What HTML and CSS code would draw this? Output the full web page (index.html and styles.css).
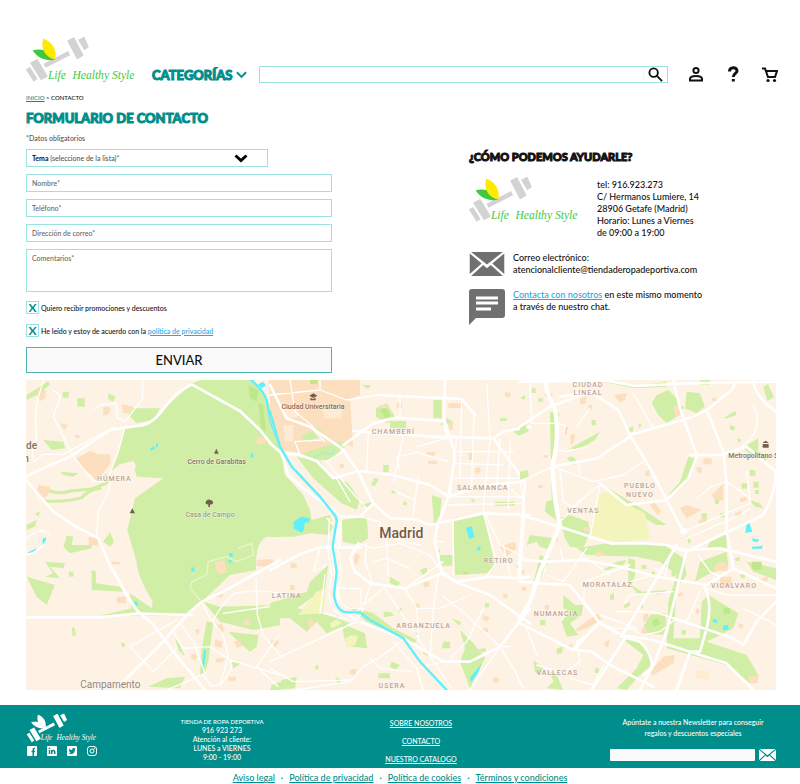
FILE: index.html
```
<!DOCTYPE html>
<html lang="es">
<head>
<meta charset="utf-8">
<meta name="viewport" content="width=device-width, initial-scale=1">
<title>Formulario de contacto - Life Healthy Style</title>
<link rel="stylesheet" href="styles.css">
</head>
<body>
<svg class="defs" aria-hidden="true">
  <symbol id="logo" viewBox="78 20 332 142">
    <g class="weights">
      <path d="M202 34l21-11 29 56-20 12zM235 31l19-9 14 31-14 10zM90 101l22-12 32 53-21 12zM77 121l13-7 23 36-12 8zM131 104l74-39 6 13-74 38z"/>
    </g>
    <path class="leaf-green" d="M166 91C145 98 111 88 98 63C128 57 154 65 166 91Z"/>
    <path class="leaf-yellow" d="M166 91C135 84 121 58 130 28C158 37 172 62 166 91Z"/>
    <text x="144" y="149" class="logo-text">Life</text>
    <text x="218" y="149" class="logo-text">Healthy Style</text>
  </symbol>
  <symbol id="envelope" viewBox="0 0 36 25">
    <path d="M1.500 0h33L18 13zM0 1.500L12.500 12 0 23zM36 1.500V23L23.500 12zM1.500 25L14 13.500l4 3.500 4-3.500L34.500 25z"/>
  </symbol>
</svg>

<header class="top">
  <a class="brand" href="#" aria-label="Life Healthy Style"><svg class="logo"><use href="#logo"/></svg></a>
  <button class="categories" type="button">CATEGORÍAS
    <svg class="chevron" viewBox="0 0 12 8"><path d="M1 1l5 5 5-5"/></svg>
  </button>
  <form class="search" role="search">
    <input type="search" aria-label="Buscar">
    <button type="submit" aria-label="Buscar">
      <svg viewBox="0 0 16 16"><circle cx="6" cy="6" r="4.500"/><path d="M9 9l6 6"/></svg>
    </button>
  </form>
  <nav class="tools" aria-label="Cuenta">
    <a href="#" aria-label="Mi cuenta"><svg viewBox="0 0 16 16"><circle cx="8" cy="4" r="2.600"/><path d="M2 14v-1.500c0-4 12-4 12 0V14z"/></svg></a>
    <a href="#" aria-label="Ayuda"><svg viewBox="0 0 16 16"><path class="thick" d="M4.500 5c0-5 7.500-5 7.500-.5C12 7 8.300 7 8.300 10.500M8.300 12.500v2.500"/></svg></a>
    <a href="#" aria-label="Carrito"><svg viewBox="0 0 16 16"><path d="M0 2h3l3 8.500h7L15 4.500H4.500"/><circle class="dot" cx="6" cy="14" r="1.600"/><circle class="dot" cx="12.500" cy="14" r="1.600"/></svg></a>
  </nav>
</header>

<main>
  <nav class="crumbs" aria-label="Ruta"><a href="#">INICIO</a> &gt; CONTACTO</nav>
  <h1>FORMULARIO DE CONTACTO</h1>

  <div class="columns">
    <form class="contact">
      <p class="note">*Datos obligatorios</p>
      <div class="picker">
        <label for="tema"><b>Tema</b> (seleccione de la lista)*</label>
        <select id="tema"><option value=""></option></select>
        <svg viewBox="0 0 14 9"><path d="M1.500 1.500L7 6.500l5.500-5"/></svg>
      </div>
      <input class="field" type="text" placeholder="Nombre*" aria-label="Nombre">
      <input class="field" type="tel" placeholder="Teléfono*" aria-label="Teléfono">
      <input class="field" type="email" placeholder="Dirección de correo*" aria-label="Dirección de correo">
      <textarea class="field area" placeholder="Comentarios*" aria-label="Comentarios"></textarea>
      <div class="check"><input id="promo" type="checkbox" checked><label for="promo">Quiero recibir promociones y descuentos</label></div>
      <div class="check"><input id="priv" type="checkbox" checked><label for="priv">He leído y estoy de acuerdo con la <a href="#">política de privacidad</a></label></div>
      <button class="send" type="submit">ENVIAR</button>
    </form>

    <section class="help">
      <h2>¿CÓMO PODEMOS AYUDARLE?</h2>
      <div class="shop">
        <svg class="logo"><use href="#logo"/></svg>
        <address>tel: 916.923.273<br>C/ Hermanos Lumiere, 14<br>28906 Getafe (Madrid)<br>Horario: Lunes a Viernes<br>de 09:00 a 19:00</address>
      </div>
      <div class="way">
        <svg class="mail"><use href="#envelope"/></svg>
        <p>Correo electrónico:<br>atencionalcliente@tiendaderopadeportiva.com</p>
      </div>
      <div class="way">
        <svg class="chat" viewBox="0 0 36 36"><path d="M3 0h30q3 0 3 3v23q0 3-3 3H7l-7 7V3q0-3 3-3z"/><path class="lines" d="M7 9h22M7 14h22M7 20h15"/></svg>
        <p><a href="#">Contacta con nosotros</a> en este mismo momento<br>a través de nuestro chat.</p>
      </div>
    </section>
  </div>

  <svg class="map" viewBox="18 15 2250 930" role="img" aria-label="Mapa de Madrid">
    <rect class="land" x="18" y="15" width="2250" height="930"/>

    <!-- West: Casa de Campo -->
    <g>
      <path class="park" d="M515 25L545 15H700L745 80L790 230V485H740Q705 500 708 585L630 600L545 680L500 722H400L240 722L335 700L330 655L395 700L398 680Q350 600 350 560L322 465L345 370L430 310L350 305L340 270L270 290L300 215L315 155H370Q410 140 440 95Z"/>
      <path class="land" d="M272 290L300 268L340 258L348 272L340 300L350 306L300 330L262 340Z"/>
      <path class="park" d="M330 100H420L400 135L350 145L325 120zM20 605L105 630L80 690L50 665zM70 195L130 200L135 220L95 225zM120 290L175 295L160 305L130 300zM140 482L160 485L155 510H215V520L150 535L130 515zM270 472L282 500L270 515L250 500zM215 585L228 590V625L300 635L310 650L215 645zM75 560L135 565L130 580L90 575L120 610L75 605L100 595zM145 590h15v15h-12zM172 70h22v25h-22zM128 50h18v18h-18zM265 55l22 10-8 15-15-8zM20 60L60 35L85 18L90 30L50 60L20 75zM155 758l8-2 5 25-10 2zM305 802l12 4-6 12-8-8zM20 450l30-15-5 20-25 10zM45 415l15-5-5 15zM385 935L440 910L495 905L480 940zM560 740L580 740L565 860L555 895L540 900L545 820zM550 680L600 695L780 690V750L700 765L600 740zM625 770L715 780L710 815L690 830L655 800zM465 790l15 20 15 35-20-20zM635 860l30 5-25 15zM755 930l25-10v25h-30z"/>
      <path class="hedge" d="M80 345Q120 360 150 348L215 342L265 322M78 378Q140 382 185 368Q205 345 240 340"/>
      <path class="park-deep" d="M685 30l30 15-5 35-20-10zM715 85l15 5 8 80-15-10z"/>
      <path class="built" d="M168 250L210 228L235 238L270 238L272 265L230 320L215 300L190 285zM55 330L90 335L85 360L70 372L50 355zM305 88L340 95L330 115L310 115zM250 95l22 2-5 20-18 5zM55 45h22v25l-15 8-10-15zM205 487h30v25l-28-2zM585 560L612 555L622 590L600 598L588 585zM710 185L740 190L735 205L710 210zM710 555L750 552L765 560L740 575L710 573zM275 560h26v8h-26zM590 655h18v12h-18zM290 665h28v20h-28zM525 765l16-4-8 22zM585 750l20-4 10 20-14 10zM585 792l22 8-2 20-20-6zM585 850h30l-8 12h-18zM515 835l18 8-8 14-14-8zM670 735l18-4v20h-16zM640 800l16-4 14 15-18 8zM750 800l18-8 10 12-14 14zM120 145l25 5-12 15zM165 180h14v10h-14zM625 905h22v12h-22z"/>
      <path class="built" d="M745 18h40v145h-16L750 70z"/>
      <path class="water" d="M714 28l16-8 8 12-14 8zM390 222l12-8 3 6-10 8zM408 208l6-3v10l-6 2zM692 238l8-4-1 12-8 2zM68 490l10-2v18l-10 4zM25 532l25-12-4 8-20 8zM342 680l6-2 8 12-7 4zM552 824l7 2-8 56-6-2zM514 576l8 2 2 10-10 2zM626 535h12v10h-10zM625 555l14 2-12 8z"/>
      <path class="road" d="M18 305L90 270L150 245L210 205L270 165L370 150Q405 140 435 95L470 55L515 28L600 75L660 108L720 165L780 240M18 315L100 410L160 450L235 490L265 560L320 660L350 705L400 750L460 830L555 945M18 727H240L350 716L515 720M300 930L430 800L510 710L545 680L600 655L700 600L780 555"/>
      <path class="lane" d="M70 18L60 50Q40 110 50 190Q30 220 42 260L70 238L130 238L200 200L285 155M100 45L122 62L100 125L160 245L220 318L255 320M368 18V70L315 140L292 130L288 85L240 90L220 102M315 155L295 230L268 300V345L235 410L230 490M18 540Q60 530 78 500M18 490Q70 450 90 480M470 735L330 815L400 890L470 820M460 770L490 820L570 815L630 855L635 880L605 925L575 935L550 900M545 680L570 730L610 780L625 845L600 930M640 655Q720 640 780 655M580 735Q610 680 640 660M708 610L712 720L730 780L780 840M610 715L780 690M780 775L710 875L780 940M480 745L520 800L555 895L500 920L440 945M630 855L780 900"/>
      <path class="trail" d="M545 680L510 640L515 620L560 600L565 560L620 545L650 560L700 540L695 505L655 520"/>
      <path class="river" d="M690 12Q730 45 740 75L752 140L780 215"/>
    </g>

    <!-- Centre -->
    <g transform="translate(750 0)">
      <path class="built" d="M0 15H270V60L240 75L250 215L215 205L165 215L100 235L30 225L0 130Z"/>
      <path class="park" d="M0 205L30 235L45 300L100 360L120 405L125 435L180 420L190 455L175 480L120 475L70 485L0 485zM80 240L215 198L225 215L180 255L140 255zM80 245L150 258L180 300L235 325L270 375L260 405L215 385L175 350L130 310zM95 180L150 160L158 180L100 205zM215 435L290 425L295 490L265 510L218 500zM550 430L640 415L675 570L650 595L555 600zM490 75H515V130H490zM318 100L350 85L378 130L350 145L318 125zM360 138h48v22h-48zM510 540h38v32h-38zM0 685L110 650L120 620L175 570L165 640L80 700L160 715L240 745L170 775L140 740L110 770L60 730H0zM235 695L310 715L370 760L440 795L430 810L350 770L290 740zM570 765L610 805L645 850L600 940L570 860L585 820zM725 165L775 150V170L745 182zM485 360l30 10-5 50-18 30zM215 745L285 775L292 820L245 815L225 800zM365 860l25 10-12 15-18-10zM35 915L80 905L75 940L20 945zM745 300l30-15v25zM340 710h22l10 12-30 5zM340 270h16v22h-16zM275 30h28l-8 12zM545 730l30 12-8 10zM360 605l30 18-8 14-22-14zM520 800h20v20h-25zM195 905l20 10-10 15zM325 895h35v15h-35zM675 380h60v12h-60zM270 390l40-10-15 20z"/>
      <path class="yellow" d="M85 720L140 650L170 640L160 715zM180 745l20-12 15 10-30 18zM225 790l20-10 20 5-10 25-25 8z"/>
      <path class="park-deep" d="M330 105l18-8 14 25-16 8zM120 15h22v12h-22zM580 590h14v8h-14z"/>
      <path class="paved" d="M40 100h45v28h-40zM155 100h60v30h-50zM40 150h30v50h-25z"/>
      <path class="built" d="M535 85h42v14h-42zM535 145l14-6v24l-12 4zM470 230l30 2-8 10-20-2zM475 258h25v10h-25zM615 280l16-4v16l-14 4zM645 325h30v12h-30zM595 235l12-4v24h-10zM690 515L735 500L740 520L710 545zM255 535l15 6-10 30-8-8zM62 565h18v14h-18zM60 630h14v16h-14zM640 720l20 8-8 12-14-6zM115 735h14v20h-14zM430 690l14-5 8 12-14 6zM635 760h20v10h-20zM240 885l20-4-5 20-16-4zM460 820l20 12-8 12-14-8zM460 620h18v14l-16 4zM670 905l18 6-6 14-14-4zM700 655l14 4-4 12-10-2zM380 85h16v14h-16zM705 50l18 4-4 14-14-4zM210 265l14 4-4 10-12-2zM330 90h20v10h-20z"/>
      <path class="park" d="M310 310h14v12h-14zM365 345h14v10h-14zM305 322h12v10h-12zM400 380h10v10h-10zM450 585l20-8 3 18-16 4zM135 875l10-6v14h-10zM500 520l12 6-4 10zM640 570h12v8h-12zM600 370l14 4-4 10zM625 825l20-8 3 12-16 4zM740 570h10v10h-10zM645 685h12v12h-12zM690 130h20v8h-20zM385 700h10v12h-10zM510 150l20-20 18 8-10 10zM425 765l22 12-10 8z"/>
      <path class="water" d="M70 440L95 425L120 430L118 440L104 445L102 465L95 473L72 462zM588 458L605 454L613 487L598 492zM622 516l10-2-2 12-8 2zM600 908l35-42-12 30-20 26z"/>
      <path class="road" d="M0 30L50 130L120 155L215 220L265 290L310 385L270 425H215L190 405L100 340L55 300L35 235L0 205M0 585L95 535L150 517H270M35 235L90 240L140 258L190 310L265 288L370 300L480 330L535 365L650 330L765 320M325 60L575 72L615 120M525 15L522 130L553 230L552 265L535 365L500 460L495 500L515 590L555 620L660 660L780 745M220 210L310 145L378 128L522 138L530 185L670 190L765 320L745 610M250 168L400 178L530 188M310 385L360 430L430 432L480 450L550 435L640 415L780 420M515 595L405 640L300 625L255 590L240 550L265 505M190 405L205 450L190 540L205 700L270 740L400 790L520 860L600 860L640 840L690 815L780 700M515 595L560 620L660 605L745 610L780 605M670 190L700 170L780 155"/>
      <path class="lane" d="M325 60L230 75L150 45L0 60M150 45V15M120 155L165 200M60 15L75 110L130 155M390 60V130M295 170L290 290M400 180L375 300L372 320M560 190L540 365M575 75L570 310M612 110L605 330M650 25L660 190L640 400M690 190L680 345M720 200L715 400M555 265L700 270M560 230L730 230M550 310L760 310M540 365H760M535 390L755 385M440 215L530 190M385 245L440 232L535 260M370 345L410 365L435 375L430 420M445 305L435 375M270 425L330 440L330 465M380 245L388 280M265 505L310 520L390 505L480 540L515 590M290 505L285 560L305 620M350 500L355 600M360 485L400 500L450 510M310 560L350 550L420 580M495 500H525M640 415L680 560L650 605M640 405L690 510L780 555M205 640L270 640L275 700L240 720M305 620L280 690L340 640M405 640L440 700L445 790M345 640L485 850L545 940M405 790L340 840L280 875L240 920L75 945M405 640L520 560M505 600L490 700L480 850M440 700H510L600 660M520 665L590 720L690 815M440 880L520 860M370 800L440 880L460 945M690 815L645 880L600 945M690 815L730 880L760 940M690 815H720M640 700L590 800L540 850M0 860L130 800L260 740L280 700M0 880L70 920L250 915M300 850L330 880L425 890M165 600L150 715M150 520L130 590L170 570M265 740L160 715M550 435V600M725 345L760 375M700 510L720 600"/>
      <path class="lane" d="M170 260L240 345L290 400M170 260L225 225M90 240L75 200L155 195M200 310L240 380M170 430L200 460L190 520M215 435L210 520"/>
      <path class="casing" d="M178 430L174 530L185 600L178 650Q180 705 210 720M210 440L205 530L215 600L205 650Q210 695 240 700L280 700"/>
      <path class="river" d="M0 110L30 215L65 275L150 365L190 415Q205 430 198 450L188 515L200 590L192 660Q200 710 230 712L270 712L300 735L360 768L400 790L450 860L530 945"/>
      <path class="stream" d="M130 248Q160 225 180 238L195 225"/>
    </g>

    <!-- East -->
    <g transform="translate(1500 0)">
      <path class="park" d="M395 85L410 60L445 45L470 70L485 115L440 145L415 120zM500 50L540 55L555 95L530 115L495 100zM90 110L118 115L105 260L92 250zM92 285L105 330L115 440L75 410L78 380L95 375zM670 220L690 205L715 190L715 230L745 245L735 260L700 245zM505 245L525 250L500 320L440 375L450 355L480 320zM240 325L340 385L440 450L410 450L330 400zM380 415L415 435L410 450L375 430zM115 430L150 420L205 440L210 470L190 520L150 515L135 490L130 470zM170 520L260 505L430 508L490 550L500 600L470 640L460 790L540 790L545 680L565 660L655 715L640 760L560 800L680 840L715 900L690 925L620 870L440 820L445 680L470 600L420 560L350 545L200 540zM570 500L620 470V520L560 520zM540 560L620 530L625 575L560 600L525 620zM680 560L768 580V615L700 590zM30 480L100 490L90 525L60 515L50 500L20 510zM325 550L345 555V600L335 630L365 650L440 645L430 655L355 660L325 620zM130 660L165 690L190 690L185 720L150 745L175 780L140 785L125 740L150 710L130 700zM390 720L435 715L440 750L430 780L380 775L370 755zM300 785L360 800L390 830L395 870L360 900L320 945L290 940L350 880L370 840zM90 890L110 900L130 945L80 940L100 920zM60 540L90 555L60 610L40 625zM150 220L240 170L225 195L175 225zM240 590L290 560L320 555L310 570L260 585zM610 130L645 108L650 120L620 130zM0 290l20-5-5 25-15 5zM540 15h30v15h-30zM0 155l20-8-2 20-18 5zM230 17L345 33L440 20L440 35L345 40zM730 35l14-8 18 40-20 10zM690 375l30 10 10 15-25-5zM660 600l15-5v14h-12zM545 415h15v25h-15zM110 820l20-5-5 20-15 2zM40 855l30 25-10 20-15-8zM0 70l15-10v15z"/>
      <path class="park-deep" d="M610 700h20v16h-20zM395 735l18-6 8 18-20 8zM695 560h30v24h-28z"/>
      <path class="yellow" d="M238 358L262 350L345 400L375 415L392 490L300 505L210 480z"/>
      <path class="paved" d="M530 885l40 5-5 25-40-5z"/>
      <path class="built" d="M280 60L320 55L315 75L300 82zM460 95l14-5 6 30-14 6zM575 360L610 325V375L590 380zM390 390l12-8 22 25-10 15zM480 400L500 390L545 405L500 430zM375 290l14-5v18h-12zM550 250h25v18h-25zM530 275l16 4v16l-14-4zM645 415l20-8v14l-18 6zM660 370l20-5v12l-18 5zM170 760L235 715L245 735L200 760L170 770zM225 535l20-8 8 10-18 10zM190 455l18 4-2 12-16-4zM370 720l14-5v20l-14 8zM365 760h15v18h-15zM385 895L430 845L465 840L460 865L400 900zM585 570l18-12 20 10v20h-40zM600 605h35v30h-35zM685 905L718 898L712 925H690zM180 70l20-6-4 22-14 4zM150 180l16-4-6 30-8 4zM75 690h14l-4 16-12-4zM75 50l22 5v10h-22zM95 495l18-8v12l-16 8zM145 810l14-4-8 18zM655 745l16 4-4 12-12-4zM725 610l20-6-4 18-16 6zM535 435l20-6v12l-18 6zM0 590l16-6-4 14zM5 635h14v12h-14zM475 655l14-4v14h-14zM530 700l10 4-4 14-10-4zM55 330h14v10h-14zM70 240h14v8h-14zM575 70l14-4v12h-12zM255 800l14-6-4 22-12-4zM205 90h12v14h-12zM130 160l14-6-4 24-10 4z"/>
      <path class="park" d="M35 40h12v14h-12zM55 70h14v10h-14zM325 160l14-6v16h-12zM215 135h12v16h-12zM355 145l10 4-6 12zM480 90l12 6-6 10zM650 190l14 4-6 12zM630 150l16 5-4 12-12-4zM690 285h16v18h-16zM700 320h16v18h-16zM665 325h16v16h-16zM705 345h12v12h-12zM60 735h16v16h-16zM585 375h12v12h-12zM600 415h14v12h-14zM500 480l14 20-8 8zM450 665h14v14h-14zM455 590h12v14h-12zM365 570h14v12h-14zM395 590h10v12h-10zM270 660l12-6v20h-12zM310 690l20-8v10l-16 8zM550 745h14v16h-14zM485 765h12v14h-12zM645 550l14-4v12h-12zM225 880h12v14h-12zM410 650h12v8h-12zM355 690h14v10h-14zM140 250q20-15 30 10l-10 10z"/>
      <path class="land" d="M480 665L535 635L520 730L475 740z"/>
      <path class="water" d="M680 446L688 444L697 470L676 474zM697 490L718 494L712 502L698 498zM696 515L722 514L728 510L726 521H696zM578 732l14 3-2 10-10-4zM608 752l16-2 2 14-16 2z"/>
      <path class="road wide" d="M75 15Q80 60 105 100Q120 180 98 270Q100 370 120 450L60 590L30 680L0 730"/>
      <path class="road" d="M0 420L120 455L270 505L380 505L440 510L500 525L600 520L768 560M305 785L470 510M0 155L90 95L210 50M0 20L260 17L345 33L500 25L768 20M120 65L210 50L295 105L330 180L390 280L490 470M330 180L520 125L560 105L635 45L650 15M460 15L480 100L530 240M560 105L610 230L620 330L620 470L640 580M510 240L600 240L680 215L768 290M530 245L505 310L440 375L320 390L240 325M700 15Q700 60 768 110M98 275L230 250L330 185M0 620L60 625L150 630L190 680L240 745L305 780L400 795L540 840L620 865L700 945M440 510L500 530L540 510L730 420Q768 350 768 290M500 525L440 770L400 870L360 945M0 555L80 560L190 555L300 575L410 605L560 630L640 580L768 640M550 630Q580 680 560 760L540 830L510 830L470 945M305 785L360 800Q400 840 395 880L370 900M315 790L215 945M170 825L215 830L270 870L400 935M0 745L160 825L240 740M460 730L640 790L670 810L710 740L768 680"/>
      <path class="lane" d="M30 15L35 145L105 145L135 150L130 180M340 55L400 160M115 225L140 230L200 215M170 155L210 100M0 320L100 275L220 320L310 300L370 260M175 260L180 300M210 490L240 330L200 360L120 440M120 285L130 380L155 395L240 330M0 315L15 420L0 620M490 470L690 385L690 370L620 320L575 335L530 370M500 490L660 420L690 400M680 290L690 375M700 90Q740 170 650 225M310 690L330 660L460 650M290 710L395 710L500 740M190 680L195 620L330 570M450 545L435 600M405 580L440 600M535 540L570 590L600 605M560 640L620 660L768 660M80 600L130 620L200 520M80 560L70 600M120 520L130 560L200 550L270 600M330 620L400 600M500 740L540 650M240 745L290 760L330 760L370 780L420 770L470 730M50 870L130 895L180 860L170 800L200 780M150 910L220 930L250 870M20 760L50 840M240 720L350 760M670 700L730 730L768 750"/>
      <circle class="lane" cx="490" cy="468" r="8"/>
    </g>

    <g class="place big"><text x="18" y="222" text-anchor="start">de</text><text x="10" y="260" text-anchor="start">n</text><text class="light" x="271" y="940">Campamento</text><text class="city" x="1144" y="490">Madrid</text></g>
    <g class="place"><text x="590" y="268">Cerro de Garabitas</text><text class="green" x="570" y="425">Casa de Campo</text><text class="brown" x="879" y="102">Ciudad Universitaria</text><text x="2125" y="248" text-anchor="start">Metropolitano S</text></g>
    <g class="district">
      <text x="283" y="317">HÚMERA</text><text x="800" y="669">LATINA</text><text x="1120" y="176">CHAMBERÍ</text><text x="1388" y="344">SALAMANCA</text><text x="1436" y="563">RETIRO</text><text x="1211" y="760">ARGANZUELA</text><text x="1116" y="939">USERA</text>
      <text x="1704" y="35">CIUDAD</text><text x="1704" y="61">LINEAL</text><text x="1860" y="340">PUEBLO</text><text x="1860" y="366">NUEVO</text><text x="1690" y="413">VENTAS</text><text x="1763" y="636">MORATALAZ</text><text x="2142" y="638">VICÁLVARO</text><text x="1608" y="724">NUMANCIA</text><text x="1612" y="899">VALLECAS</text>
    </g>
    <g class="marks"><path d="M582 236l7-15 7 15zM329 415l8-15 8 15zM565 396v-7q-12-1-7-10 5-9 16-3 10 6 2 12l-6 1v7zM868 62l12-7 12 7-12 7zM871 68v8h16v-8l-8 4zM2228 207h18v11h-18zM2227 204l10-7 10 7z"/></g>
  </svg>
</main>

<footer>
  <div class="foot">
    <div class="foot-brand">
      <svg class="logo white"><use href="#logo"/></svg>
      <div class="social">
        <a href="#" aria-label="Facebook"><svg viewBox="0 0 20 20"><rect width="20" height="20" rx="2"/><path class="cut" d="M16 5h-1.500q-2 0-2 2v13M9 11h7"/></svg></a>
        <a href="#" aria-label="LinkedIn"><svg viewBox="0 0 20 20"><rect width="20" height="20" rx="2"/><path class="cut" d="M5 8v8M5 3.500v2.500M9.500 16V8M9.500 12q0-3 3-3t3 3v4"/></svg></a>
        <a href="#" aria-label="Twitter"><svg viewBox="0 0 20 20"><rect width="20" height="20" rx="2"/><path class="bird" d="M4 5q3 3 6 3 0-4 3.500-4 1.500 0 2 1l2-.5-1.500 2Q16 16 8 16q-3 0-5-1.500 3 0 4-1.500-2.500-.5-3-2.500h1.500Q3 9 4 5z"/></svg></a>
        <a href="#" aria-label="Instagram"><svg viewBox="0 0 20 20"><rect class="ring" x="1" y="1" width="18" height="18" rx="5"/><circle class="ring" cx="10" cy="10" r="4"/><circle cx="15" cy="5" r="1.300"/></svg></a>
      </div>
    </div>
    <p class="foot-info"><span class="small">TIENDA DE ROPA DEPORTIVA</span><br>916 923 273<br>Atención al cliente:<br>LUNES a VIERNES<br>9:00 - 19:00</p>
    <nav class="foot-links" aria-label="Enlaces"><a href="#">SOBRE NOSOTROS</a><a href="#">CONTACTO</a><a href="#">NUESTRO CATALOGO</a></nav>
    <form class="news">
      <label for="news">Apúntate a nuestra Newsletter para conseguir<br>regalos y descuentos especiales</label>
      <div class="news-row"><input id="news" type="email"><button type="submit" aria-label="Suscribirse"><svg><use href="#envelope"/></svg></button></div>
    </form>
  </div>
  <nav class="legal" aria-label="Legal"><a href="#">Aviso legal</a><span>·</span><a href="#">Política de privacidad</a><span>·</span><a href="#">Política de cookies</a><span>·</span><a href="#">Términos y condiciones</a></nav>
</footer>
</body>
</html>
```
FILE: styles.css
```
:root {
  --teal: #008e8c;
  --line: #9be3e0;
  --blue: #2ba6e0;
}

* { box-sizing: border-box; }

body {
  margin: 0;
  background: #fff;
  color: #111;
  font: 500 9px/12px Lato, "Liberation Sans", sans-serif;
}

h1, h2, p { margin: 0; }
button, input, select, textarea { font: inherit; color: inherit; margin: 0; }
button { padding: 0; border: 0; background: none; }
svg { display: block; fill: none; stroke: none; }
.defs { position: absolute; width: 0; height: 0; }

/* Logo */
.logo { width: 110px; height: 47px; --weights: #d3d3d3; --green: #3fc93f; --yellow: #ffe900; }
.logo.white { width: 72px; height: 30px; --weights: #fff; --green: #fff; --yellow: #fff; }
.weights { fill: var(--weights); }
.leaf-green { fill: var(--green); }
.leaf-yellow { fill: var(--yellow); }
.logo-text { fill: var(--green); font: italic 35px "Liberation Serif", serif; }

/* Header */
.top {
  display: flex;
  align-items: flex-end;
  padding: 36px 22px 0 26px;
}
.categories {
  display: flex;
  align-items: center;
  gap: 3px;
  margin-left: 16px;
  color: var(--teal);
  font-size: 13px;
  font-weight: 900;
  line-height: 16px;
  -webkit-text-stroke: 1px var(--teal);
}
.chevron { width: 11px; height: 8px; stroke: var(--teal); stroke-width: 2; }
.search {
  display: flex;
  flex: 1;
  height: 17px;
  margin-left: 12px;
  border: 1px solid var(--line);
}
.search input { flex: 1; min-width: 0; border: 0; padding: 0 4px; outline: 0; appearance: none; background: none; }
.search button { padding: 0 4px; border-left: 1px solid #effaf2; }
.search svg { width: 15px; height: 15px; stroke: #111; stroke-width: 2; }
.tools { display: flex; gap: 21px; margin-left: 20px; }
.tools svg { width: 16px; height: 17px; stroke: #111; stroke-width: 2; }
.tools .thick { stroke-width: 3; }
.tools .dot { fill: #111; stroke: none; }

/* Contact form */
main { padding: 0 24px 0 26px; }
.crumbs { margin-top: 10px; font-size: 6px; line-height: 10px; }
.crumbs a { color: var(--teal); }
h1 { margin-top: 5px; color: var(--teal); font-size: 13px; font-weight: 900; line-height: 20px; -webkit-text-stroke: 1px var(--teal); }
.columns {
  display: grid;
  grid-template-columns: minmax(0, 306fr) minmax(0, 307fr);
  column-gap: 137px;
  padding-top: 5px;
}
.contact { display: flex; flex-direction: column; font-size: 7px; line-height: 10px; }
.note { margin-bottom: 6px; color: #555; }
.picker {
  display: grid;
  align-items: center;
  width: 79%;
  height: 18px;
  margin-bottom: 7px;
  border: 1px solid var(--line);
  color: #555;
}
.picker > * { grid-area: 1 / 1; }
.picker label { padding-left: 5px; pointer-events: none; }
.picker b { color: #111; }
.picker select { width: 100%; height: 100%; border: 0; background: none; appearance: none; }
.picker svg { width: 14px; height: 9px; margin-right: 19px; justify-self: end; stroke: #000; stroke-width: 3; pointer-events: none; }
.field {
  width: 100%;
  height: 18px;
  margin-bottom: 7px;
  padding: 0 5px;
  border: 1px solid var(--line);
  background: #fff;
  outline: 0;
}
.field::placeholder { color: #666; opacity: 1; }
.area { height: 43px; margin-bottom: 9px; padding-top: 3px; resize: none; }
.check { display: flex; align-items: center; gap: 2px; margin-bottom: 10px; }
.check input {
  display: grid;
  place-items: center;
  width: 13px;
  height: 13px;
  appearance: none;
  border: 1px solid var(--line);
}
.check input:checked::before { content: "X"; color: var(--teal); font-size: 12px; font-weight: 700; line-height: 11px; }
.check a, .help a { color: var(--blue); }
.send { height: 26px; border: 1px solid #4fb3af; background: #fafafa; font-size: 13px; }

/* Help column */
.help { padding-top: 14px; font-size: 9px; }
h2 { color: #111; font-size: 11px; font-weight: 900; line-height: 20px; -webkit-text-stroke: 1px #111; }
.shop { display: flex; gap: 18px; margin-top: 9px; }
.shop .logo { flex: none; }
address { padding-top: 3px; font-style: normal; white-space: nowrap; }
.way { display: flex; gap: 8px; margin-top: 13px; white-space: nowrap; }
.way svg { flex: none; width: 36px; fill: #707070; }
.mail { height: 24px; }
.chat { height: 36px; }
.way .lines { stroke: #fff; stroke-width: 3; }

/* Map */
.map { width: 100%; height: auto; margin-top: 7px; stroke-linejoin: round; stroke-linecap: round; }
.land { fill: #fef2e4; }
.park { fill: #d1eea6; }
.hedge { stroke: #d1eea6; stroke-width: 9; }
.park-deep { fill: #c0e88b; }
.built { fill: #fcdfbe; }
.paved { fill: #fdebd5; }
.yellow { fill: #f4f5bd; }
.water { fill: #60effc; }
.river { stroke: #60effc; stroke-width: 7; }
.stream { stroke: #8ff0e0; stroke-width: 3; }
.road { stroke: #fff; stroke-width: 8; }
.wide { stroke-width: 13; }
.lane, .casing { stroke: #fff; stroke-width: 4; }
.trail { stroke: #eaf5cf; stroke-width: 4; }
.map text { text-anchor: middle; font-family: Roboto, sans-serif; stroke: #fff; stroke-width: 3; stroke-opacity: .6; paint-order: stroke; }
.map text[text-anchor="start"] { text-anchor: start; }
.place { fill: #7d7168; font-size: 21px; font-weight: 500; }
.place .green { fill: #98a078; }
.place .brown { fill: #85694f; }
.big { font-size: 30px; }
.big .light { fill: #94857b; font-weight: 400; }
.big .city { fill: #715a48; font-size: 42px; }
.district { fill: #b9a396; font-size: 21px; letter-spacing: 3px; }
.marks { fill: #75604f; }

/* Footer */
footer { margin-top: 15px; }
.foot {
  display: grid;
  grid-template-columns: 96fr 200fr 198fr 256fr;
  height: 63px;
  padding: 0 24px 0 26px;
  background: var(--teal);
  color: #fff;
}
.foot a { color: #fff; }
.foot-brand { padding-top: 8px; }
.social { display: flex; gap: 10px; padding: 3px 0 0 1px; }
.social svg { width: 10px; height: 10px; fill: #fff; }
.social .cut { fill: none; stroke: var(--teal); stroke-width: 3; }
.social .bird { fill: var(--teal); }
.social .ring { fill: none; stroke: #fff; stroke-width: 2; }
.foot-info { padding-top: 12px; text-align: center; font-size: 7px; line-height: 9px; }
.foot-info .small { font-size: 6px; }
.foot-links { display: flex; flex-direction: column; align-items: center; gap: 6px; padding-top: 12px; font-size: 7px; }
.news { justify-self: end; width: 166px; padding-top: 12px; text-align: center; }
.news label { display: block; font-size: 7px; line-height: 11px; white-space: nowrap; }
.news-row { display: flex; gap: 4px; margin-top: 10px; }
.news-row input { flex: 1; min-width: 0; height: 12px; border: 0; border-radius: 1px; background: #fafafa; }
.news-row svg { width: 17px; height: 12px; fill: #fff; }
.legal { display: flex; justify-content: center; gap: 6px; padding-top: 4px; color: var(--teal); }
.legal a { color: inherit; }
```
